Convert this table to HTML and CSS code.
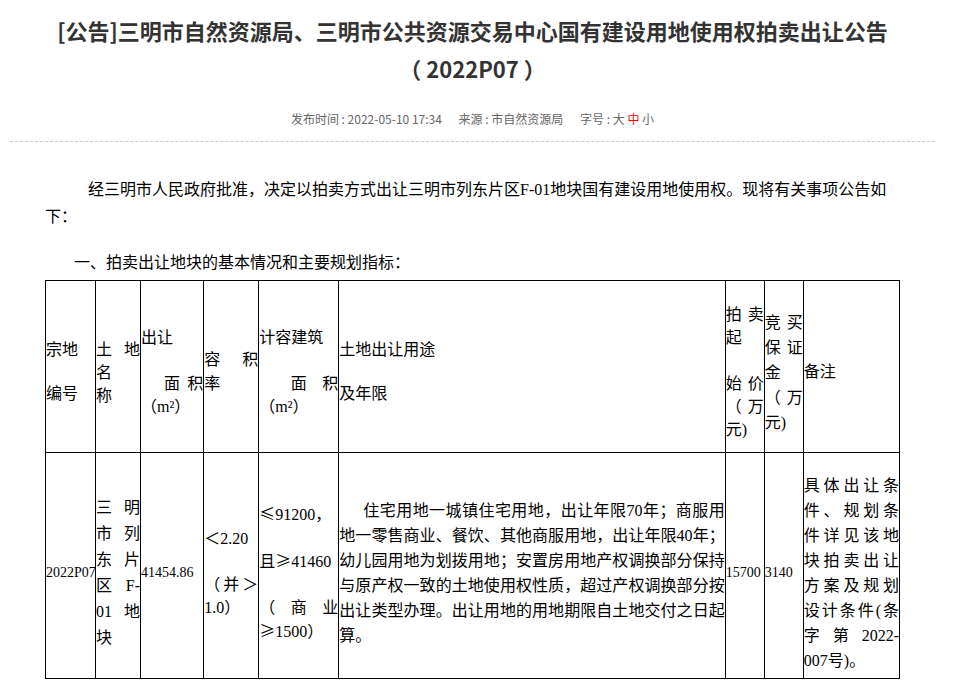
FILE: index.html
```html
<!DOCTYPE html>
<html lang="zh-CN">
<head>
<meta charset="utf-8">
<title>三明市自然资源局公告</title>
<link rel="stylesheet" href="styles.css">
</head>
<body>
<div class="wrap">
  <h1 class="title">[公告]三明市自然资源局、三明市公共资源交易中心国有建设用地使用权拍卖出让公告<span class="yr"><span class="pl">（</span>2022P07<span class="pr">）</span></span></h1>
  <div class="meta">
    <span>发布时间 : 2022-05-10 17:34</span>
    <span>来源 : 市自然资源局</span>
    <span>字号 : 大 <em class="cur">中</em> 小</span>
  </div>
  <div class="content">
    <p class="para">经三明市人民政府批准，决定以拍卖方式出让三明市列东片区F-01地块国有建设用地使用权。现将有关事项公告如下：</p>
    <p class="sec">一、拍卖出让地块的基本情况和主要规划指标：</p>
    <table class="grid">
      <colgroup>
        <col style="width:50px"><col style="width:45px"><col style="width:63px"><col style="width:55px"><col style="width:80px"><col style="width:386px"><col style="width:39px"><col style="width:39px"><col style="width:96px">
      </colgroup>
      <tr class="head">
        <td><div class="lh44">宗地<br>编号</div></td>
        <td><div class="lh23"><span class="jl">土地</span><span class="ln">名</span><span class="ln">称</span></div></td>
        <td><div class="lh23"><span class="ln">出让</span><span class="ln">&nbsp;</span><span class="jl">　面积</span><span class="ln">（m²）</span></div></td>
        <td><div class="lh24"><span class="jl">容积</span><span class="ln">率</span></div></td>
        <td><div class="lh23"><span class="ln">计容建筑</span><span class="ln">&nbsp;</span><span class="jl">　面积</span><span class="ln">（m²）</span></div></td>
        <td><div class="lh44">土地出让用途<br>及年限</div></td>
        <td><div class="lh23"><span class="jl">拍卖</span><span class="ln">起</span><span class="ln">&nbsp;</span><span class="jl">始价</span><span class="jl">（万</span><span class="ln">元)</span></div></td>
        <td><div class="lh25"><span class="jl">竞买</span><span class="jl">保证</span><span class="ln">金</span><span class="jl">（万</span><span class="ln">元)</span></div></td>
        <td><div class="lh44">备注</div></td>
      </tr>
      <tr class="body">
        <td class="num">2022P07</td>
        <td><div class="lh26"><span class="jl">三明</span><span class="jl">市列</span><span class="jl">东片</span><span class="jl">区F-</span><span class="jl">01地</span><span class="ln">块</span></div></td>
        <td class="num">41454.86</td>
        <td><div class="lh23"><span class="ln">＜2.20</span><span class="ln">&nbsp;</span><span class="jl">（并＞</span><span class="ln">1.0）</span></div></td>
        <td><div class="lh23"><span class="ln"><span class="cjk">≤</span>91200，</span><span class="ln">&nbsp;</span><span class="ln">且<span class="cjk">≥</span>41460</span><span class="ln">&nbsp;</span><span class="jl">（商业</span><span class="ln"><span class="cjk">≥</span>1500）</span></div></td>
        <td><p class="use">住宅用地一城镇住宅用地，出让年限70年；商服用地一零售商业、餐饮、其他商服用地，出让年限40年；幼儿园用地为划拨用地；安置房用地产权调换部分保持与原产权一致的土地使用权性质，超过产权调换部分按出让类型办理。出让用地的用地期限自土地交付之日起算。</p></td>
        <td class="num">15700</td>
        <td class="num">3140</td>
        <td><div class="lh25"><span class="jl">具体出让条</span><span class="jl">件、规划条</span><span class="jl">件详见该地</span><span class="jl">块拍卖出让</span><span class="jl">方案及规划</span><span class="jl">设计条件(条</span><span class="jl">字第2022-</span><span class="ln">007号)。</span></div></td>
      </tr>
    </table>
  </div>
</div>
</body>
</html>
```

FILE: styles.css
```css
html, body {
  margin: 0;
  padding: 0;
  background: #fff;
}
* {
  text-spacing-trim: space-all;
}
.wrap {
  width: 925px;
  margin-left: 10px;
}
.title {
  margin: 0;
  padding-top: 11px;
  font-family: "Noto Sans CJK SC", sans-serif;
  font-weight: bold;
  font-size: 22px;
  line-height: 38px;
  color: #333;
  text-align: center;
}
.yr {
  white-space: nowrap;
}
.pl, .pr {
  display: inline-block;
  width: 22px;
}
.pl {
  text-align: right;
  padding-right: 5px;
}
.pr {
  text-align: left;
  padding-left: 5px;
}
.meta {
  margin-top: 22px;
  padding-bottom: 12px;
  border-bottom: 1px dashed #ccc;
  font-family: "Noto Sans CJK SC", sans-serif;
  font-size: 12px;
  line-height: 20px;
  color: #666;
  text-align: center;
}
.meta span {
  margin: 0 7px;
}
.meta .cur {
  font-style: normal;
  color: #f00;
}
.content {
  padding: 0 35px;
  font-family: "Liberation Serif", "Noto Sans CJK SC", serif;
  font-size: 16px;
  color: #000;
}
.para {
  margin: 34px 0 0;
  line-height: 27px;
  text-indent: 43px;
}
.sec {
  margin: 19px 0 0;
  line-height: 27px;
  padding-left: 29px;
}
.grid {
  margin-top: 4px;
  border-collapse: collapse;
  table-layout: fixed;
  width: 855px;
}
.grid td {
  border: 1px solid #000;
  padding: 0;
  vertical-align: middle;
  overflow: hidden;
}
.head td {
  height: 160px;
  padding-top: 11px;
}
.body td {
  height: 211px;
  padding-top: 14px;
}
.num {
  font-size: 14px;
}
.cjk {
  font-family: "Noto Sans CJK SC", sans-serif;
}
.ln, .jl {
  display: block;
}
.jl {
  text-align: justify;
  text-align-last: justify;
}
.lh44 { line-height: 44px; }
.lh23 { line-height: 23px; }
.lh24 { line-height: 24px; }
.lh25 { line-height: 25px; }
.lh26 { line-height: 26px; }
.use {
  margin: 0;
  line-height: 25px;
  text-indent: 24px;
  text-align: justify;
}
```
